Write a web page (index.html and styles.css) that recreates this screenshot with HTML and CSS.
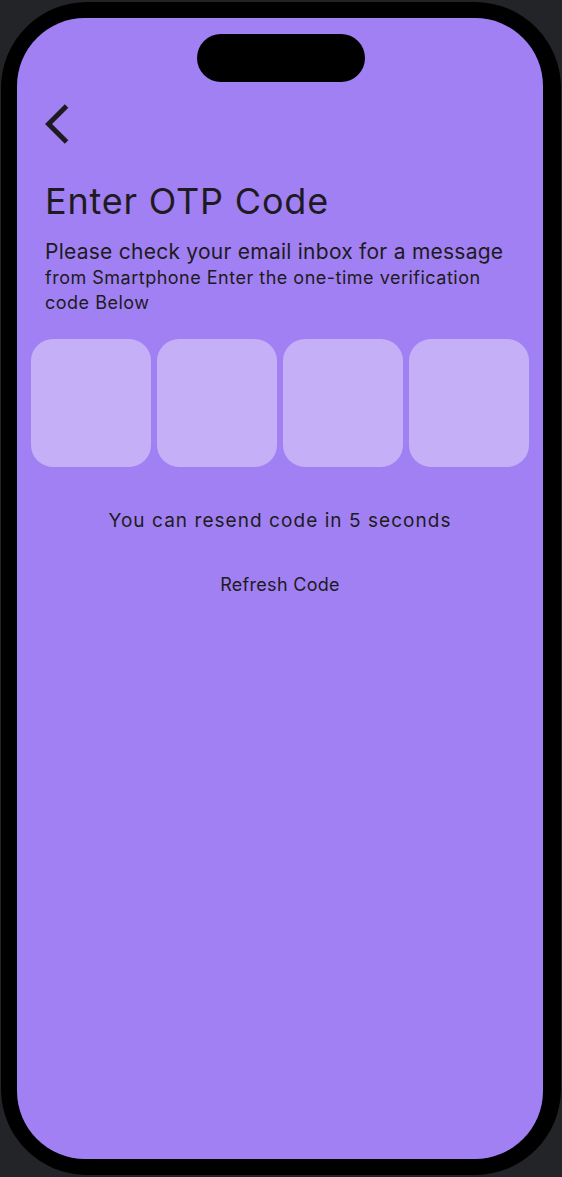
FILE: index.html
```html
<!DOCTYPE html>
<html>
<head>
<meta charset="utf-8">
<link rel="stylesheet" href="styles.css">
</head>
<body>
<div class="phone">
  <div class="screen">
    <div class="island"></div>
    <div class="back">
      <svg width="48" height="48" viewBox="0 0 24 24"><path d="M11.67 3.87L9.9 2.1 0 12l9.9 9.9 1.77-1.77L3.54 12z" fill="#1d1b20"/></svg>
    </div>
    <div class="content">
      <h1 class="title">Enter OTP Code</h1>
      <p class="desc"><span class="lead">Please check your email inbox for a message</span> from Smartphone Enter the one-time verification code Below</p>
    </div>
    <div class="otp">
      <div class="box"></div>
      <div class="box"></div>
      <div class="box"></div>
      <div class="box"></div>
    </div>
    <p class="resend">You can resend code in 5 seconds</p>
    <p class="refresh">Refresh Code</p>
  </div>
</div>
</body>
</html>
```
FILE: styles.css
```css
html, body {
  margin: 0;
  padding: 0;
  background: #222428;
  width: 562px;
  height: 1177px;
  overflow: hidden;
}
.phone {
  margin: 2px 0 0 1px;
  width: 560px;
  height: 1173px;
  box-sizing: border-box;
  padding: 16px 18px 16px 16px;
  background: #000;
  border-radius: 86px;
}
.screen {
  position: relative;
  height: 100%;
  background: #a180f4;
  border-radius: 68px;
  overflow: hidden;
  font-family: Inter, sans-serif;
  color: #1d1b20;
  display: flex;
  flex-direction: column;
}
.island {
  position: absolute;
  left: 180px;
  top: 16px;
  width: 168px;
  height: 48px;
  border-radius: 24px;
  background: #000;
}
.back {
  margin: 82px 0 0 28px;
  width: 48px;
  height: 48px;
}
.back svg { display: block; }
.content {
  padding: 0 28px;
}
.title {
  margin: 31px 0 0;
  font-size: 36px;
  font-weight: 400;
  line-height: 44px;
  letter-spacing: 0.8px;
}
.desc {
  margin: 16px 0 0;
  font-size: 18px;
  line-height: 25px;
  letter-spacing: 0.5px;
}
.lead {
  font-size: 21px;
  letter-spacing: 0.25px;
}
.otp {
  display: flex;
  gap: 6px;
  padding: 0 14px;
  margin-top: 24px;
}
.box {
  flex: 1;
  height: 128px;
  border-radius: 22px;
  background: #c5b0f8;
}
.resend {
  margin: 40px 0 0;
  text-align: center;
  font-size: 19px;
  letter-spacing: 1.05px;
  line-height: 28px;
}
.refresh {
  margin: 38px 0 0;
  text-align: center;
  font-size: 18px;
  letter-spacing: 0.3px;
  line-height: 24px;
}
```
